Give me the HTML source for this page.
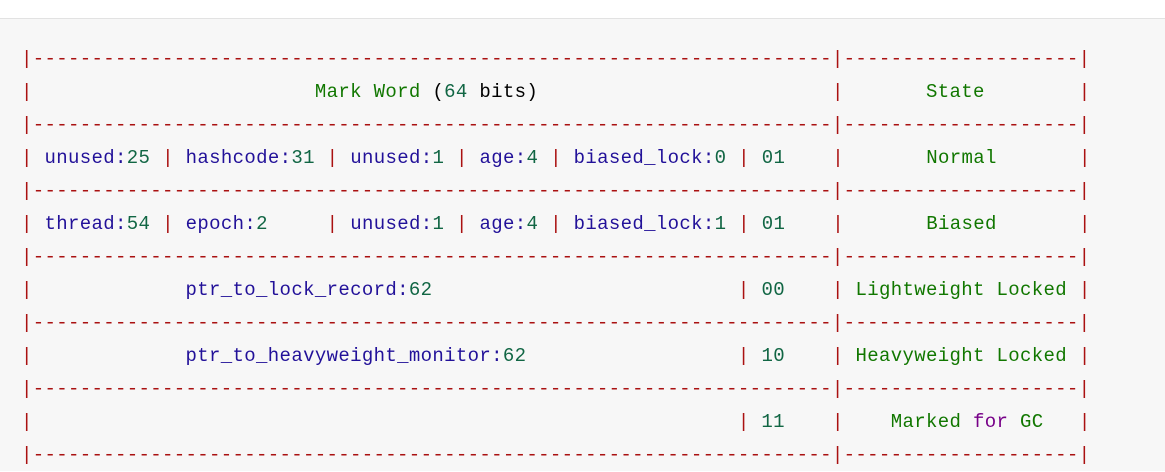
<!DOCTYPE html>
<html><head><meta charset="utf-8"><style>
html,body{margin:0;padding:0;background:#fff;width:1165px;height:471px;overflow:hidden}
.top{height:18px;background:#fff;border-bottom:1px solid #e2e2e2}
.code{position:absolute;top:19px;left:0;width:1165px;height:452px;background:#f7f7f7}
pre{position:absolute;left:21px;top:43px;margin:0;font-family:"Liberation Mono",monospace;font-size:19px;letter-spacing:0.35px;line-height:33px;color:#000;white-space:pre}
.r{color:#a11}.n{color:#219}.d{color:#164}.g{color:#170}.k{color:#708}
</style></head><body>
<div class="top"></div>
<div class="code"></div>
<pre><span class="r">|--------------------------------------------------------------------|--------------------|</span>
<span class="r">|</span>                        <span class="g">Mark Word</span> (<span class="d">64</span> bits)                         <span class="r">|</span>       <span class="g">State</span>        <span class="r">|</span>
<span class="r">|--------------------------------------------------------------------|--------------------|</span>
<span class="r">|</span> <span class="n">unused:</span><span class="d">25</span> <span class="r">|</span> <span class="n">hashcode:</span><span class="d">31</span> <span class="r">|</span> <span class="n">unused:</span><span class="d">1</span> <span class="r">|</span> <span class="n">age:</span><span class="d">4</span> <span class="r">|</span> <span class="n">biased_lock:</span><span class="d">0</span> <span class="r">|</span> <span class="d">01</span>    <span class="r">|</span>       <span class="g">Normal</span>       <span class="r">|</span>
<span class="r">|--------------------------------------------------------------------|--------------------|</span>
<span class="r">|</span> <span class="n">thread:</span><span class="d">54</span> <span class="r">|</span> <span class="n">epoch:</span><span class="d">2</span>     <span class="r">|</span> <span class="n">unused:</span><span class="d">1</span> <span class="r">|</span> <span class="n">age:</span><span class="d">4</span> <span class="r">|</span> <span class="n">biased_lock:</span><span class="d">1</span> <span class="r">|</span> <span class="d">01</span>    <span class="r">|</span>       <span class="g">Biased</span>       <span class="r">|</span>
<span class="r">|--------------------------------------------------------------------|--------------------|</span>
<span class="r">|</span>             <span class="n">ptr_to_lock_record:</span><span class="d">62</span>                          <span class="r">|</span> <span class="d">00</span>    <span class="r">|</span> <span class="g">Lightweight Locked</span> <span class="r">|</span>
<span class="r">|--------------------------------------------------------------------|--------------------|</span>
<span class="r">|</span>             <span class="n">ptr_to_heavyweight_monitor:</span><span class="d">62</span>                  <span class="r">|</span> <span class="d">10</span>    <span class="r">|</span> <span class="g">Heavyweight Locked</span> <span class="r">|</span>
<span class="r">|--------------------------------------------------------------------|--------------------|</span>
<span class="r">|</span>                                                            <span class="r">|</span> <span class="d">11</span>    <span class="r">|</span>    <span class="g">Marked</span> <span class="k">for</span> <span class="g">GC</span>   <span class="r">|</span>
<span class="r">|--------------------------------------------------------------------|--------------------|</span></pre>
</body></html>
